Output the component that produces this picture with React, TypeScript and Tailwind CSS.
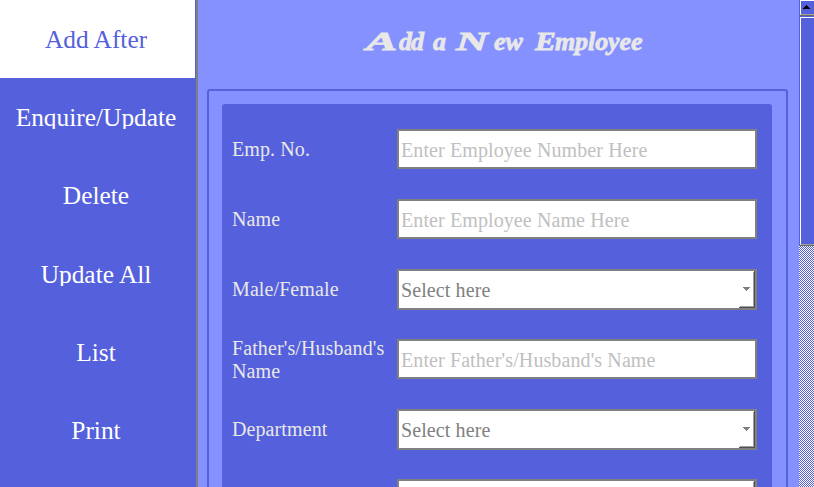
const menu = ["Add After", "Enquire/Update", "Delete", "Update All", "List", "Print"];

type Field = { label: string; text: string; select?: boolean };
const fields: Field[] = [
  { label: "Emp. No.", text: "Enter Employee Number Here" },
  { label: "Name", text: "Enter Employee Name Here" },
  { label: "Male/Female", text: "Select here", select: true },
  { label: "Father's/Husband's Name", text: "Enter Father's/Husband's Name" },
  { label: "Department", text: "Select here", select: true },
  { label: "", text: "", select: true },
];

function Sidebar() {
  return (
    <nav className="flex w-[198px] shrink-0 flex-col border-r-2 border-[#808080] bg-[#5560dc]">
      {menu.map((m, i) => (
        <div
          key={m}
          className={
            "flex h-[78.3px] shrink-0 items-center justify-center pb-px " +
            (i === 0 ? "mr-px bg-white pr-[3px] text-[#5560dc]" : "pr-[4px] text-white")
          }
        >
          <span className="h-[24px] overflow-hidden text-[25.4px] leading-[25px] whitespace-nowrap">{m}</span>
        </div>
      ))}
    </nav>
  );
}

function Title() {
  return (
    <h1 className="flex h-[89px] shrink-0 items-start pt-[26px] pl-[168px] font-['Liberation_Serif'] text-[26px] leading-[32px] font-bold text-[#e8e8e8] italic [-webkit-text-stroke:0.8px_#e8e8e8]">
      <span className="w-[33px]">
        <span className="inline-block origin-left scale-x-[1.8]">A</span>
      </span>
      <span className="w-[34px] tracking-[-1px]">dd</span>
      <span className="w-[23px]">a</span>
      <span className="w-[38px]">
        <span className="inline-block origin-left scale-x-[1.7]">N</span>
      </span>
      <span className="w-[41px]">ew</span>
      <span className="w-[20px]">
        <span className="inline-block origin-left scale-x-[1.2]">E</span>
      </span>
      <span className="tracking-[-0.1px]">mployee</span>
    </h1>
  );
}

function FieldRow({ label, text, select }: Field) {
  return (
    <div className="flex h-[70px] shrink-0 items-start pl-[10px] text-[20px] tracking-[0.1px]">
      <div className="flex h-[40px] w-[165px] shrink-0 items-center pt-px leading-[23px] text-[#e8e8e8]">
        {label}
      </div>
      {select ? (
        <div className="flex h-[41px] w-[360px] items-center border-2 border-[#808080] bg-white pl-[2px] text-[#808080]">
          <span className="grow">{text}</span>
          <span className="flex h-[37px] w-[16px] items-center justify-center">
            <svg width="16" height="37" shapeRendering="crispEdges">
              <path d="M4 16h7v1h-1v1h-1v1h-1v1h-1v-1h-1v-1h-1v-1h-1z" fill="#808080" />
              <path d="M14 1h1v35H1v-1h13z" fill="#a0a0a0" />
              <path d="M15 0h1v37H0v-1h15z" fill="#505050" />
            </svg>
          </span>
        </div>
      ) : (
        <div className="flex h-[40px] w-[360px] items-center border-2 border-[#808080] bg-white pt-px pl-[2px] text-[#c0c0c0]">
          {text}
        </div>
      )}
    </div>
  );
}

function Scrollbar() {
  return (
    <div className="flex w-[15px] shrink-0 flex-col bg-white bg-[conic-gradient(#5560dc_25%,#fff_0_50%,#5560dc_0_75%,#fff_0)] bg-size-[2px_2px]">
      <div className="h-[16px] border-b border-l border-[#5560dc] border-b-[#696969] bg-[#5560dc]">
        <div className="flex h-[15px] justify-center border-t border-b border-l border-white border-b-[#a0a0a0]">
          <svg width="13" height="13" shapeRendering="crispEdges">
            <path d="M5 4h1v1h1v1h1v1h1v1H2V7h1V6h1V5h1z" fill="#000" />
          </svg>
        </div>
      </div>
      <div className="h-[230px] border-t border-b border-l border-[#5560dc] border-b-[#696969] bg-[#5560dc]">
        <div className="h-full border-t border-b border-l border-white border-b-[#a0a0a0]" />
      </div>
    </div>
  );
}

export default function App() {
  return (
    <div className="flex h-[487px] w-[814px] overflow-hidden bg-[#8491ff] font-['Liberation_Serif',serif]">
      <Sidebar />
      <main className="flex w-[601px] shrink-0 flex-col">
        <Title />
        <section className="mr-[11px] ml-[9px] h-[600px] shrink-0 rounded-[3px] border-2 border-[#5560dc] pt-[13px] pr-[14px] pl-[13px]">
          <div className="flex h-[600px] flex-col rounded-[3px] bg-[#5560dc] pt-[25px]">
            {fields.map((f, i) => (
              <FieldRow key={i} {...f} />
            ))}
          </div>
        </section>
      </main>
      <Scrollbar />
    </div>
  );
}
